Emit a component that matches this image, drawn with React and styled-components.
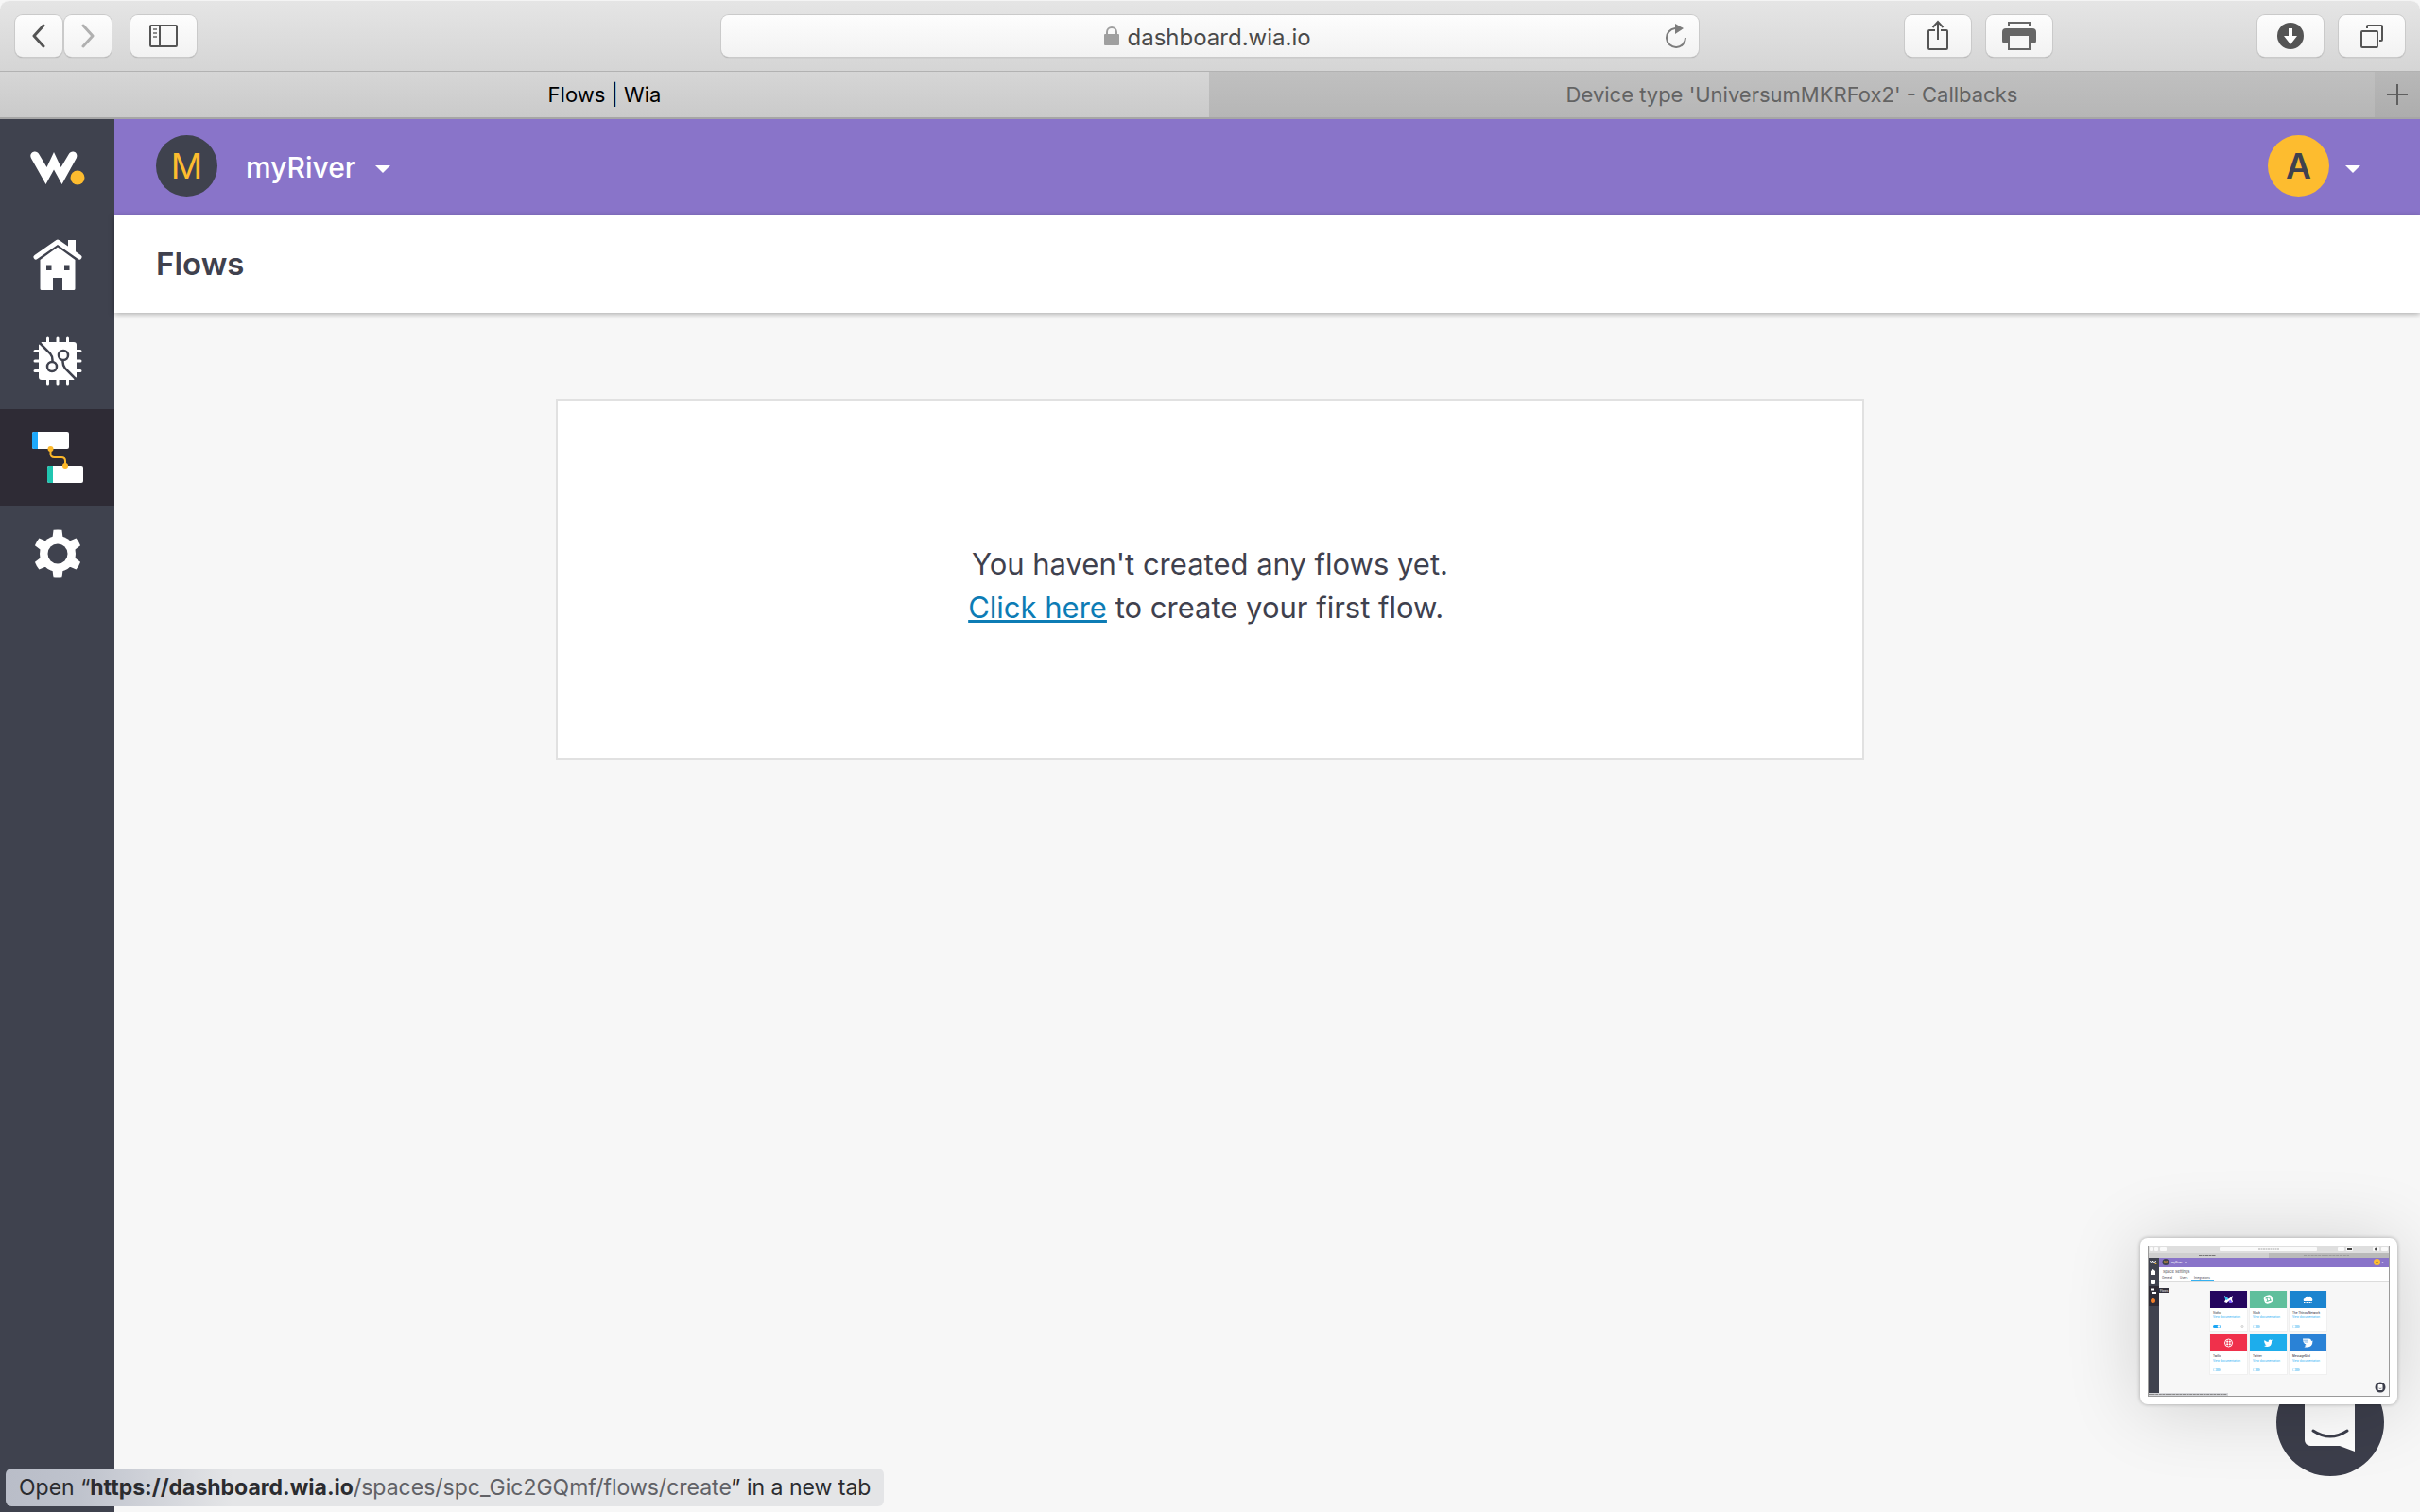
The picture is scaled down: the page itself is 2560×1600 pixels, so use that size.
import React from "react";
import styled, { createGlobalStyle } from "styled-components";

const UI_FONT = `Inter, "Liberation Sans", sans-serif`;

const NAV_ITEMS = [
  { id: "home", label: "Home" },
  { id: "devices", label: "Devices" },
  { id: "flows", label: "Flows", active: true },
  { id: "settings", label: "Settings" },
];

const INTEGRATIONS = [
  { name: "Sigfox", x: 66, y: 48, color: "#25065f", enabled: true },
  { name: "Slack", x: 108, y: 48, color: "#60bf9c" },
  { name: "The Things Network", x: 150, y: 48, color: "#1b84cf" },
  { name: "Twilio", x: 66, y: 94, color: "#f0304b" },
  { name: "Twitter", x: 108, y: 94, color: "#1dadec" },
  { name: "MessageBird", x: 150, y: 94, color: "#2a82d6" },
];

const BackIcon = () => (
  <svg width="16" height="26" viewBox="0 0 16 26" fill="none">
    <path d="M13 2 3 13l10 11" stroke="#545454" strokeWidth="3" strokeLinecap="round" strokeLinejoin="round" />
  </svg>
);

const ForwardIcon = () => (
  <svg width="16" height="26" viewBox="0 0 16 26" fill="none">
    <path d="m3 2 10 11L3 24" stroke="#b0b0b0" strokeWidth="3" strokeLinecap="round" strokeLinejoin="round" />
  </svg>
);

const SidebarIcon = () => (
  <svg width="30" height="24" viewBox="0 0 30 24" fill="none">
    <rect x="1" y="1" width="28" height="22" rx="1" stroke="#545454" strokeWidth="2" />
    <path d="M11 1v22" stroke="#545454" strokeWidth="2" />
    <path d="M4 5h4M4 9h4M4 13h4" stroke="#8c8c8c" strokeWidth="2" />
  </svg>
);

const LockIcon = () => (
  <svg width="16" height="20" viewBox="0 0 16 20" fill="none">
    <rect y="8" width="16" height="12" rx="1" fill="#9f9f9f" />
    <path d="M3 9V6a5 5 0 0 1 10 0v3" stroke="#9f9f9f" strokeWidth="2" />
  </svg>
);

const ReloadIcon = () => (
  <svg width="24" height="28" viewBox="0 0 24 28" fill="none">
    <path d="M11 6a10 10 0 1 0 11 10" stroke="#7c7c7c" strokeWidth="2" />
    <path d="M11 1v11l9-6z" fill="#7c7c7c" />
  </svg>
);

const ShareIcon = () => (
  <svg width="24" height="36" viewBox="0 0 24 36" fill="none" stroke="#545454" strokeWidth="2">
    <path d="M9 12H3a1 1 0 0 0-1 1v18a1 1 0 0 0 1 1h18a1 1 0 0 0 1-1V13a1 1 0 0 0-1-1h-6" />
    <path d="M12 22V3M6.500 9 12 3l5.500 6" />
  </svg>
);

const PrintIcon = () => (
  <svg width="36" height="32" viewBox="0 0 36 32" fill="none">
    <path d="M7 5V2h22v3" stroke="#666" strokeWidth="2" />
    <path d="M4 8h28a4 4 0 0 1 4 4v9a3 3 0 0 1-3 3H3a3 3 0 0 1-3-3v-9a4 4 0 0 1 4-4z" fill="#666" />
    <path d="M7 15h22v15H7z" fill="#f7f7f7" stroke="#666" strokeWidth="2" />
  </svg>
);

const DownloadIcon = () => (
  <svg width="28" height="28" viewBox="0 0 28 28">
    <circle cx="14" cy="14" r="14" fill="#545454" />
    <path d="M12 6h4v8h5l-7 9-7-9h5z" fill="#fff" />
  </svg>
);

const TabsIcon = () => (
  <svg width="26" height="28" viewBox="0 0 26 28" fill="none" stroke="#545454" strokeWidth="2">
    <rect x="2" y="9" width="17" height="17" rx="1" />
    <path d="M8 6V4a1 1 0 0 1 1-1h14a1 1 0 0 1 1 1v14a1 1 0 0 1-1 1h-2" />
  </svg>
);

const PlusIcon = () => (
  <svg width="24" height="24" viewBox="0 0 24 24" stroke="#5f5f5f" strokeWidth="2">
    <path d="M1 12h22M12 1v22" />
  </svg>
);

const WiaLogo = () => (
  <svg width="58" height="36" viewBox="0 0 58 36">
    <path
      d="M1 7.500C-.8 4 1 1.500 3.500.7 6 0 8 1 9.300 3.200L17.500 17 25 1l7.500 16L40.700 3.200C42 1 44 0 46.500.7 49 1.500 50 4 49 7L33.500 35 25 19.500 16.500 35z"
      fill="#fff"
    />
    <circle cx="50" cy="28" r="7.500" fill="#fdbc2f" />
  </svg>
);

const HomeIcon = () => (
  <svg width="52" height="56" viewBox="0 0 52 56">
    <path d="M37 2h8v15l-8-6z" fill="#fff" />
    <path d="M3 20 26 4l23 16" fill="none" stroke="#fff" strokeWidth="5" strokeLinecap="round" strokeLinejoin="round" />
    <path
      fillRule="evenodd"
      d="M26 9.500 44.500 23v30.500a1.500 1.500 0 0 1-1.500 1.500H31V42H21v13H9a1.500 1.500 0 0 1-1.500-1.500V23zM14 28.500v5.500h5.500v-5.500zM33 28.500v5.500h5.500v-5.500z"
      fill="#fff"
    />
  </svg>
);

const ChipIcon = () => (
  <svg width="52" height="52" viewBox="0 0 52 52" fill="none">
    <path
      d="M15.500 2v48M26 2v48M36.500 2v48M2 15.500h48M2 26h48M2 36.500h48"
      stroke="#fff"
      strokeWidth="3"
      strokeLinecap="round"
    />
    <rect x="6" y="6" width="40" height="40" rx="3" fill="#fff" />
    <path d="M7 7l11 11q2.500 3 2.500 7v2M45 45 34 34q-2.500-3-2.500-7v-3" stroke="#3f424e" strokeWidth="2.500" />
    <circle cx="20" cy="32" r="5" stroke="#3f424e" strokeWidth="2.500" />
    <circle cx="32" cy="20" r="5" stroke="#3f424e" strokeWidth="2.500" />
    <path d="M4.500 4.500h6l-6 6zM47.500 47.500v-6l-6 6z" fill="#3f424e" />
  </svg>
);

const FlowsIcon = () => (
  <svg width="56" height="56" viewBox="0 0 56 56" fill="none">
    <rect x="1" y="1" width="39" height="18" rx="2" fill="#fff" />
    <path d="M3 1h4v18H3a2 2 0 0 1-2-2V3a2 2 0 0 1 2-2z" fill="#1fa9fb" />
    <rect x="17" y="37" width="38" height="18" rx="2" fill="#fff" />
    <path d="M19 37h4v18h-4a2 2 0 0 1-2-2V39a2 2 0 0 1 2-2z" fill="#20c5b0" />
    <path d="M20.500 19v5q0 4 4 4H32q4 0 4 4v5" stroke="#fdb82a" strokeWidth="2" />
    <circle cx="20.500" cy="19" r="3" fill="#fdb82a" />
    <circle cx="36" cy="37" r="3" fill="#fdb82a" />
  </svg>
);

const GearIcon = () => (
  <svg width="52" height="52" viewBox="0 0 52 52">
    <g fill="#fff">
      <circle cx="26" cy="26" r="19" />
      {[0, 60, 120].map((angle) => (
        <path
          key={angle}
          d="M21.500.8q4.500-.8 9 0L31.500 9v34l-1 8.200q-4.500.8-9 0L20.500 43V9z"
          transform={`rotate(${angle} 26 26)`}
        />
      ))}
    </g>
    <circle cx="26" cy="26" r="10.500" fill="#3f424e" />
  </svg>
);

const NAV_ICONS = {
  home: HomeIcon,
  devices: ChipIcon,
  flows: FlowsIcon,
  settings: GearIcon,
};

const MessengerIcon = () => (
  <svg width="54" height="64" viewBox="0 0 54 64" fill="none">
    <path d="M6 0h41a6 6 0 0 1 6 6v57l-16-6H6a6 6 0 0 1-6-6V6a6 6 0 0 1 6-6z" fill="#fff" />
    <path d="M9 41q18 12 36 0" stroke="#3c3e4b" strokeWidth="3" strokeLinecap="round" />
  </svg>
);

const BrandMark = ({ name }) => {
  switch (name) {
    case "Sigfox":
      return (
        <>
          <path d="M-4.500-4 0-.5 4.500-4 3.500 0 4.500 3 1.500 4 0 2-2 4-4.500 3-3 0z" fill="#fff" />
          <path d="M-4.500-4 0-.5-2 1-3.500 0z" fill="#35c3f3" />
          <path d="M0 2 2 .5 4 4H1.500z" fill="#7b5cff" />
        </>
      );
    case "Slack":
      return (
        <>
          <rect x="-4.500" y="-4.500" width="9" height="9" rx="3.500" fill="#fff" transform="rotate(-15)" />
          <path d="M-3-1 2-2.500M-2 2.500 3 1M-2-2.500-.5 2.500M1-3 2.500 2" stroke="#60bf9c" strokeWidth="1" />
        </>
      );
    case "The Things Network":
      return (
        <>
          <path d="M-4.500 2q-1-3 1.500-3 .5-3 3.500-2 3-1 3 1.500 2 1 1 3.500z" fill="#fff" />
          <path d="M-4.500 3.500h9" stroke="#fff" strokeWidth="1" strokeDasharray="1 .5" />
        </>
      );
    case "Twilio":
      return (
        <>
          <circle r="4" fill="none" stroke="#fff" strokeWidth="1" />
          <g fill="#fff">
            <circle cx="-1.300" cy="-1.300" r="1.100" />
            <circle cx="1.300" cy="-1.300" r="1.100" />
            <circle cx="-1.300" cy="1.300" r="1.100" />
            <circle cx="1.300" cy="1.300" r="1.100" />
          </g>
        </>
      );
    case "Twitter":
      return (
        <path
          d="M-4-3q2 2 4 2 0-3 2-2.500l1 .5 1.500-.5-1 1.500Q4 4-1.500 4q-2 0-3-1 1.500 0 2.500-.8-1.500-.4-2-1.700h1q-1.500-1-1.300-2z"
          fill="#fff"
        />
      );
    default:
      return (
        <>
          <path
            d="M-5.500-4.500H1q2.500 0 2.500 2.500l1.500-.5Q5 4.500-1 4.500h-3L-2 2.500h-1.500L-2 1h-1.500Q-5.500-1-5.500-4.500z"
            fill="#fff"
          />
          <path d="M-5-2.800h5.500M-4-1h4" stroke="#2a82d6" strokeWidth=".6" />
        </>
      );
  }
};

// Miniature of the integrations page shown in the floating preview.
const PreviewDrawing = () => (
  <svg width="256" height="160" viewBox="0 0 256 160" fontFamily="Inter, sans-serif" role="img" aria-label="Screen preview">
    <rect width="256" height="160" fill="#f7f7f7" />
    <rect width="256" height="8" fill="#dedede" />
    <rect y="8" width="128" height="5" fill="#cfcfcf" />
    <rect x="128" y="8" width="128" height="5" fill="#b9b9b9" />
    <g fill="#fafafa">
      <rect x="2" y="2" width="4" height="4" rx="1" />
      <rect x="7" y="2" width="4" height="4" rx="1" />
      <rect x="13" y="2" width="7" height="4" rx="1" />
      <rect x="76" y="2" width="103" height="4" rx="1" />
      <rect x="201" y="2" width="7" height="4" rx="1" />
      <rect x="210" y="2" width="7" height="4" rx="1" />
      <rect x="238" y="2" width="7" height="4" rx="1" />
      <rect x="247" y="2" width="7" height="4" rx="1" />
    </g>
    <circle cx="241.500" cy="4" r="1.500" fill="#444" />
    <rect x="211" y="3" width="5" height="2" fill="#444" />
    <path d="M117 4h22" stroke="#aaa" strokeDasharray="2 .5" />
    <path d="M54 10.500h18" stroke="#777" strokeDasharray="3 .5" />
    <path d="M165 10.500h48" stroke="#9c9c9c" strokeDasharray="3 .8" />
    <rect x="11" y="13" width="245" height="10" fill="#8974c9" />
    <rect x="11" y="23" width="245" height="15" fill="#fff" />
    <path d="M11 38.500h245" stroke="#dcdcdc" />
    <rect y="13" width="12" height="147" fill="#3f424e" />
    <rect y="43" width="12" height="21" fill="#2e2b35" />
    <path d="m2.500 16 1.500 3 1.500-3L7 19l1.500-3" stroke="#fff" fill="none" />
    <circle cx="8.500" cy="19" r="1" fill="#fdbc2f" />
    <path d="M3 27 5.500 25 8 27v4H3z" fill="#fff" />
    <rect x="3" y="36" width="5" height="5" rx="1" fill="#fff" />
    <path d="M3 46.500h4M5 50h4" stroke="#fff" strokeWidth="2" />
    <circle cx="5.500" cy="58.500" r="2.500" fill="#f07f2c" />
    <rect x="12" y="45" width="10" height="5" fill="#34323c" />
    <circle cx="19" cy="17.500" r="3.500" fill="#3f424e" />
    <circle cx="242.500" cy="17.500" r="3.500" fill="#fdbc2f" />
    <path d="m242.500 15.500 1.500 3.500h-3z" fill="#3f424e" />
    <path d="M247.500 17.500h2l-1 1z" fill="#fff" />
    <path d="M39 17.500h2l-1 1z" fill="#fff" />
    <text x="17" y="19" fontSize="4" fill="#fdbc2f">M</text>
    <text x="25" y="19" fontSize="3" fill="#fff">myRiver</text>
    <text x="13" y="49" fontSize="3" fill="#fff">Flows</text>
    <text x="16" y="29" fontSize="4" fill="#3f424e">Space Settings</text>
    <g fontSize="3" fill="#3f424e">
      <text x="15" y="35">General</text>
      <text x="34" y="35">Users</text>
      <text x="49" y="35">Integrations</text>
    </g>
    <path d="M46 37.500h24" stroke="#35b1f0" />
    {INTEGRATIONS.map(({ name, x, y, color, enabled }) => (
      <g key={name} transform={`translate(${x} ${y})`}>
        <rect x="-1" y="0" width="41" height="43" fill="#f0f0f0" />
        <rect width="39" height="42" fill="#fff" />
        <rect width="39" height="18" fill={color} />
        <g transform="translate(19.500 9)">
          <BrandMark name={name} />
        </g>
        <text x="3" y="24" fontSize="3" fontWeight="500" fill="#3f424e">{name}</text>
        <text x="3" y="29" fontSize="3" fill="#2bb0f5">View documentation</text>
        <rect x="3" y="36" width="8" height="3" rx="1.500" fill={enabled ? "#1ba6f5" : "#a8dcf8"} />
        <circle cx={enabled ? 9 : 5} cy="37.500" r="1.300" fill="#fff" />
        {enabled && <circle cx="34" cy="37.500" r="1" fill="none" stroke="#ccc" />}
      </g>
    ))}
    <rect y="156" width="85" height="3" fill="#d5d6da" />
    <path d="M1 157.500h83" stroke="#888" strokeDasharray="3 .6" />
    <circle cx="246" cy="150" r="5.500" fill="#3c3e4b" />
    <rect x="243.500" y="147" width="5" height="6" rx="1" fill="#fff" />
    <path d="M244.500 151q1.500 1 3 0" stroke="#3c3e4b" strokeWidth=".6" fill="none" />
    <rect x=".5" y=".5" width="255" height="159" fill="none" stroke="#9a9a9a" />
  </svg>
);

const App = () => {
  return (
    <>
      <GlobalStyle />
      <BrowserWindow>
        <Toolbar>
          <ToolbarGroup>
            <ButtonPair>
              <ToolbarButton narrow aria-label="Back">
                <BackIcon />
              </ToolbarButton>
              <ToolbarButton narrow aria-label="Forward">
                <ForwardIcon />
              </ToolbarButton>
            </ButtonPair>
            <ToolbarButton aria-label="Show sidebar">
              <SidebarIcon />
            </ToolbarButton>
          </ToolbarGroup>
          <AddressBar>
            <AddressSite>
              <LockIcon />
              <AddressInput aria-label="Address" defaultValue="dashboard.wia.io" />
            </AddressSite>
            <ReloadButton aria-label="Reload">
              <ReloadIcon />
            </ReloadButton>
          </AddressBar>
          <ToolbarActions>
            <ActionPair>
              <ToolbarButton aria-label="Share">
                <ShareIcon />
              </ToolbarButton>
              <ToolbarButton aria-label="Print">
                <PrintIcon />
              </ToolbarButton>
            </ActionPair>
            <ActionPair>
              <ToolbarButton aria-label="Downloads">
                <DownloadIcon />
              </ToolbarButton>
              <ToolbarButton aria-label="Show tabs">
                <TabsIcon />
              </ToolbarButton>
            </ActionPair>
          </ToolbarActions>
        </Toolbar>
        <TabBar>
          <Tab active>Flows | Wia</Tab>
          <Tab>Device type 'UniversumMKRFox2' - Callbacks</Tab>
          <NewTabButton aria-label="New tab">
            <PlusIcon />
          </NewTabButton>
        </TabBar>
        <Page>
          <Sidebar>
            <LogoLink href="#home" aria-label="Wia">
              <WiaLogo />
            </LogoLink>
            {NAV_ITEMS.map(({ id, label, active }) => {
              const Icon = NAV_ICONS[id];
              return (
                <NavLink key={id} href={`#${id}`} aria-label={label} $active={active}>
                  <Icon />
                </NavLink>
              );
            })}
          </Sidebar>
          <Content>
            <SpaceBar>
              <SpaceButton>
                <Avatar bgColor="#3f424e" textColor="#fdbc2f" weight="400">
                  M
                </Avatar>
                <SpaceName>myRiver</SpaceName>
                <Caret />
              </SpaceButton>
              <AccountButton aria-label="Account">
                <Avatar bgColor="#fdbc2f" textColor="#3f424e" weight="600">
                  A
                </Avatar>
                <Caret />
              </AccountButton>
            </SpaceBar>
            <PageHeader>
              <PageTitle>Flows</PageTitle>
            </PageHeader>
            <Main>
              <EmptyCard>
                <EmptyText>
                  You haven't created any flows yet.
                  <br />
                  <CreateLink href="#create">Click here</CreateLink> to create your first flow.&nbsp;
                </EmptyText>
              </EmptyCard>
            </Main>
          </Content>
        </Page>
      </BrowserWindow>
      <MessengerButton aria-label="Open messenger">
        <MessengerIcon />
      </MessengerButton>
      <Preview>
        <PreviewDrawing />
      </Preview>
      <StatusBar>
        Open “<StatusHost>https://dashboard.wia.io</StatusHost>
        <StatusPath>/spaces/spc_Gic2GQmf/flows/create</StatusPath>” in a new tab
      </StatusBar>
    </>
  );
};

const GlobalStyle = createGlobalStyle`
  * {
    box-sizing: border-box;
  }

  body {
    margin: 0;
    background: #f7f7f7;
    font-family: ${UI_FONT};
    color: #3f414e;
  }

  button {
    padding: 0;
    border: 0;
    background: none;
    font-family: inherit;
    cursor: pointer;
  }

  svg {
    display: block;
    flex-shrink: 0;
  }
`;

const BrowserWindow = styled.div`
  display: flex;
  flex-direction: column;
  min-height: 100vh;
`;

const Toolbar = styled.header`
  display: grid;
  grid-template-columns: minmax(0, 1fr) minmax(0, 1034px) minmax(0, 1fr);
  align-items: center;
  height: 76px;
  border-top: 1px solid #f4f4f4;
  border-bottom: 1px solid #b2b2b2;
  border-radius: 10px 10px 0 0;
  background: linear-gradient(#e5e5e5, #d5d5d5);
`;

const ToolbarGroup = styled.div`
  display: flex;
  gap: 20px;
  padding-left: 16px;
`;

const ButtonPair = styled.div`
  display: flex;
  gap: 2px;
`;

const ToolbarActions = styled.div`
  display: flex;
  justify-content: space-between;
  padding: 0 16px 0 218px;
`;

const ActionPair = styled.div`
  display: flex;
  gap: 16px;
`;

const ToolbarButton = styled.button.withConfig({
  shouldForwardProp: (prop) => prop !== "narrow",
})`
  display: flex;
  justify-content: center;
  align-items: center;
  width: ${(props) => (props.narrow ? "50px" : "70px")};
  height: 44px;
  border-radius: 8px;
  background: linear-gradient(#fdfdfd, #f2f2f2);
  box-shadow: 0 0 0 1px #cacaca, 0 1px 1px 0 #8f8f8f;
`;

const AddressBar = styled.div`
  display: grid;
  grid-template-columns: 1fr auto 1fr;
  align-items: center;
  height: 44px;
  padding: 0 12px;
  border-radius: 8px;
  background: linear-gradient(#fdfdfd, #f2f2f2);
  box-shadow: 0 0 0 1px #cacaca, 0 1px 1px 0 #8f8f8f;
`;

const AddressSite = styled.div`
  grid-column: 2;
  display: flex;
  align-items: center;
  gap: 9px;
`;

const AddressInput = styled.input`
  width: 200px;
  padding: 2px 0 0;
  border: 0;
  background: none;
  font-family: inherit;
  font-size: 24px;
  color: #4a4a4a;
  field-sizing: content;
`;

const ReloadButton = styled.button`
  justify-self: end;
`;

const TabBar = styled.nav`
  display: grid;
  grid-template-columns: 1279fr 1233fr 48px;
  height: 50px;
  border-bottom: 2px solid #a6a6a6;
`;

const Tab = styled.button.withConfig({
  shouldForwardProp: (prop) => prop !== "active",
})`
  font-size: 22px;
  color: ${(props) => (props.active ? "#000" : "#636363")};
  background: ${(props) =>
    props.active
      ? "linear-gradient(#d6d6d6, #cacaca)"
      : "linear-gradient(#c0c0c0, #b6b6b6)"};
`;

const NewTabButton = styled.button`
  display: flex;
  justify-content: center;
  align-items: center;
  background: linear-gradient(#b8b8b8, #adadad);
`;

const Page = styled.div`
  display: flex;
  flex: 1;
`;

const Sidebar = styled.nav`
  width: 121px;
  flex-shrink: 0;
  background: #3f424e;
`;

const LogoLink = styled.a`
  display: flex;
  justify-content: center;
  align-items: center;
  height: 103px;
`;

const NavLink = styled.a`
  display: flex;
  justify-content: center;
  align-items: center;
  height: 102px;
  background: ${(props) => (props.$active ? "#2e2b35" : "transparent")};
`;

const Content = styled.div`
  display: flex;
  flex-direction: column;
  flex: 1;
  min-width: 0;
`;

const SpaceBar = styled.div`
  display: flex;
  justify-content: space-between;
  align-items: center;
  height: 102px;
  padding: 0 63px 4px 44px;
  background: #8974c9;
`;

const SpaceButton = styled.button`
  display: flex;
  align-items: center;
`;

const AccountButton = styled(SpaceButton)``;

const Avatar = styled.span.withConfig({
  shouldForwardProp: (prop) => !["bgColor", "textColor", "weight"].includes(prop),
})`
  display: flex;
  justify-content: center;
  align-items: center;
  width: 65px;
  height: 65px;
  border-radius: 50%;
  background: ${(props) => props.bgColor};
  font-size: 37px;
  font-weight: ${(props) => props.weight};
  line-height: 1;
  color: ${(props) => props.textColor};
`;

const SpaceName = styled.span`
  margin: 0 4px 0 30px;
  padding-top: 4px;
  font-size: 30px;
  font-weight: 500;
  line-height: 36px;
  color: #fff;
`;

const Caret = styled.span`
  margin: 8px 0 0 17px;
  border: 8px solid transparent;
  border-top-color: #fff;
  border-bottom: 0;
`;

const PageHeader = styled.div`
  display: flex;
  align-items: center;
  height: 103px;
  padding: 0 44px 2px;
  background: #fff;
  box-shadow: 0 1px 6px rgba(0, 0, 0, 0.35);
`;

const PageTitle = styled.h1`
  margin: 0;
  font-size: 33px;
  font-weight: 600;
  line-height: 40px;
`;

/* right padding equals the sidebar width, so the card centres on the window */
const Main = styled.main`
  flex: 1;
  padding: 91px 121px 91px 0;
`;

const EmptyCard = styled.section`
  display: flex;
  justify-content: center;
  align-items: center;
  max-width: 1384px;
  margin: 0 auto;
  padding: 150px 40px 136px;
  border: 2px solid #e1e1e1;
  background: #fff;
`;

const EmptyText = styled.p`
  margin: 0;
  font-size: 31px;
  line-height: 46px;
  text-align: center;
`;

const CreateLink = styled.a`
  color: #0d7cb5;
  text-decoration: underline;
`;

const MessengerButton = styled.button`
  position: fixed;
  right: 38px;
  bottom: 38px;
  display: flex;
  justify-content: center;
  align-items: center;
  width: 114px;
  height: 114px;
  border-radius: 50%;
  background: #3c3e4b;
`;

const Preview = styled.div`
  position: fixed;
  right: 24px;
  bottom: 114px;
  padding: 8px;
  border-radius: 8px;
  background: #fff;
  box-shadow: 0 0 4px rgba(0, 0, 0, 0.3), 0 4px 80px rgba(0, 0, 0, 0.16);
`;

const StatusBar = styled.div`
  position: fixed;
  left: 6px;
  bottom: 6px;
  padding: 0 14px;
  border-radius: 6px;
  background: linear-gradient(90deg, #b9bdc8 0, #bfc3cd 80px, #e4e5e7 240px);
  font-size: 23px;
  line-height: 40px;
  color: #2b2c30;
  white-space: nowrap;
`;

const StatusHost = styled.span`
  font-weight: 700;
`;

const StatusPath = styled.span`
  color: #606166;
`;

export default App;
